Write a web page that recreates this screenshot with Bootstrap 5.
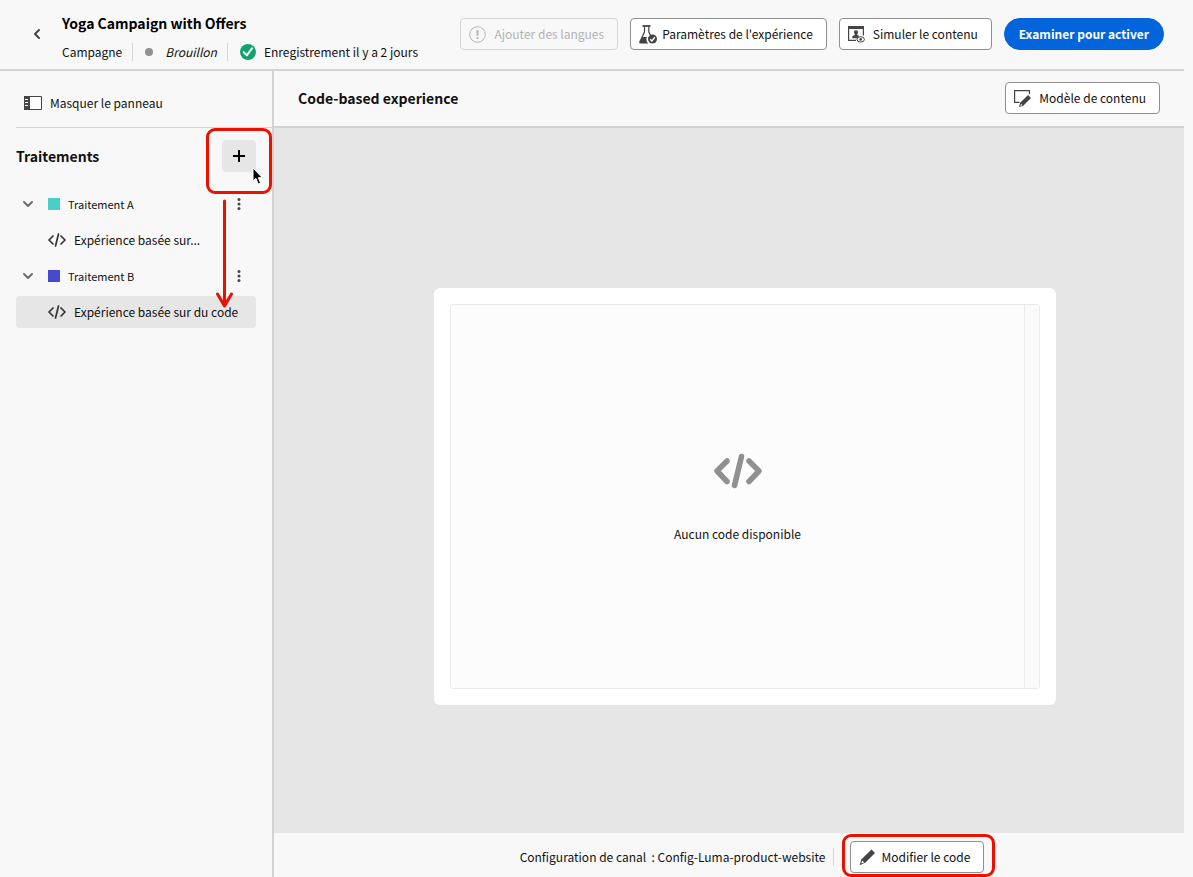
<!DOCTYPE html>
<html lang="fr">
<head>
<meta charset="utf-8">
<meta name="viewport" content="width=device-width, initial-scale=1">
<title>Yoga Campaign with Offers</title>
<link rel="stylesheet" href="https://cdn.jsdelivr.net/npm/bootstrap@5.3.0/dist/css/bootstrap.min.css">
<style>
  body { font-family: "Noto Sans CJK SC", "Noto Sans", sans-serif; font-size: 12px; line-height: 20px; color: #111; background: #f8f8f8; }
  .app { padding-right: 9px; }
  svg { display: block; flex: none; }
  .topbar { height: 71px; border-bottom: 2px solid #d3d3d3; padding: 14px 20px 0 29px; }
  .back { margin: 12px 16px 0 0; color: #444; }
  .title { font-size: 14px; line-height: 18px; font-weight: 700; color: #000; }
  .meta { margin-top: 10px; }
  .meta .rule { margin: 0 12px 0 10px; }
  .rule { width: 1px; height: 18px; background: #d8d8d8; }
  .dot { width: 8px; height: 8px; border-radius: 50%; background: #909090; margin-right: 12px; }
  .actions { gap: 12px; }
  .tool { --bs-btn-font-size: 12px; --bs-btn-line-height: 20px; --bs-btn-padding-y: 5px; --bs-btn-padding-x: 8px; --bs-btn-border-radius: 4px;
    --bs-btn-color: #111; --bs-btn-bg: #fff; --bs-btn-border-color: #909090; --bs-btn-hover-bg: #f3f3f3; --bs-btn-hover-border-color: #6e6e6e;
    --bs-btn-disabled-color: #b3b3b3; --bs-btn-disabled-bg: #f8f8f8; --bs-btn-disabled-border-color: #d5d5d5; --bs-btn-disabled-opacity: 1;
    height: 32px; padding-right: 13px; white-space: nowrap; }
  .activate { --bs-btn-font-size: 12px; --bs-btn-line-height: 18px; --bs-btn-bg: #0265dc; --bs-btn-border-color: #0265dc; --bs-btn-color: #fff;
    --bs-btn-hover-bg: #0054b6; --bs-btn-hover-color: #fff; --bs-btn-font-weight: 700; --bs-btn-padding-y: 5px; --bs-btn-padding-x: 14px; height: 32px; }
  .side { width: 274px; border-right: 2px solid #d3d3d3; padding-left: 16px; padding-right: 16px; }
  .hide-panel { height: 57px; margin-right: -16px; padding: 7px 8px 0; border-bottom: 1px solid #d5d5d5; }
  .hide-panel .btn { font-size: 12px; line-height: 20px; color: #111; }
  .side-head { height: 32px; margin: 12px 0 16px; }
  .side-head h2 { font-size: 14px; line-height: 20px; font-weight: 700; }
  .add { width: 34px; height: 32px; background: #e6e6e6; border-radius: 4px; color: #000; }
  .tree { gap: 4px; }
  .tree-row { height: 32px; padding-left: 6px; border-radius: 4px; font-size: 11px; }
  .tree-leaf { height: 32px; padding-left: 32px; border-radius: 4px; color: #111; text-decoration: none; }
  .tree-leaf.current { background: #e6e6e6; }
  .swatch { width: 12px; height: 12px; margin: 0 8px 0 14px; }
  .swatch-a { background: #4bcec8; }
  .swatch-b { background: #4549cf; }
  .more { width: 34px; height: 32px; color: #444; }
  .frame-add { position: absolute; inset: -12px -16px -22px; border: 3px solid #eb1000; border-radius: 9px; pointer-events: none; z-index: 2; }
  .frame-edit { position: absolute; inset: -7px -11px -4px -8px; border: 3px solid #eb1000; border-radius: 9px; pointer-events: none; }
  .pointer { position: absolute; left: 29px; top: 27px; z-index: 3; }
  .arrow { position: absolute; left: -7px; top: 59px; z-index: 2; pointer-events: none; }
  .section-bar { height: 57px; border-bottom: 2px solid #d3d3d3; padding: 0 24px 1px; }
  .section-bar h1 { font-size: 14px; line-height: 20px; font-weight: 700; }
  .stage { background: #e6e6e6; padding: 160px 128px 128px 160px; }
  .sheet { border-radius: 6px; padding: 16px; background: #fff; }
  .preview { background: #fcfcfc; border: 1px solid #eaeaea; border-radius: 3px; }
  .gutter { width: 15px; border-left: 1px solid #eaeaea; background: #fafafa; }
  .empty { gap: 35px; padding-top: 3px; }
  .bottom { height: 44px; padding: 4px 0 0 46px; }
</style>
</head>
<body>
<div class="app d-flex flex-column min-vh-100">
  <header class="topbar d-flex">
    <button class="back btn btn-link p-0 border-0 align-self-start" aria-label="Retour">
      <svg width="17" height="16" viewBox="0 0 17 16" fill="none" stroke="currentColor" stroke-width="2" stroke-linecap="round" stroke-linejoin="round"><path d="M10 4 6 8l4 4"/></svg>
    </button>
    <div class="text-nowrap">
      <div class="title">Yoga Campaign with Offers</div>
      <div class="meta d-flex align-items-center">
        <span>Campagne</span><span class="rule"></span>
        <span class="dot"></span><em>Brouillon</em>
        <span class="rule"></span>
        <svg class="me-2" width="16" height="16" viewBox="0 0 16 16"><circle cx="8" cy="8" r="8" fill="#12a36d"/><path d="m3.800 8.300 3 3.100 5.200-7" fill="none" stroke="#fff" stroke-width="2" stroke-linecap="round" stroke-linejoin="round"/></svg>
        <span>Enregistrement il y a 2 jours</span>
      </div>
    </div>
    <div class="actions d-flex flex-shrink-0 ms-auto pt-1">
      <button class="btn tool d-flex align-items-center gap-2" disabled>
        <svg width="17" height="17" viewBox="0 0 17 17" fill="none" stroke="currentColor"><circle cx="8.500" cy="8.500" r="7.800"/><path d="M8.500 4v5.500" stroke-width="2"/><circle cx="8.500" cy="12" r="1.100" fill="currentColor" stroke="none"/></svg>
        Ajouter des langues
      </button>
      <button class="btn tool d-flex align-items-center gap-1">
        <svg width="19" height="19" viewBox="0 0 19 19"><path d="M3.500 1h8" stroke="#444" stroke-width="1.800"/><path d="M5.500 1v6L1.300 16M9.800 1v6l1.800 3.500" fill="none" stroke="#444" stroke-width="1.200"/><path d="M3.500 12H8a5.500 5.500 0 0 0 1.200 6.400H1.500C.300 18.400-.100 17.400.5 16z" fill="#444"/><circle cx="13.500" cy="14" r="4.500" fill="#444"/><path d="m11.200 14.200 1.700 1.700 2.900-3.700" fill="none" stroke="#fff" stroke-width="1.400"/></svg>
        Paramètres de l'expérience
      </button>
      <button class="btn tool d-flex align-items-center gap-2">
        <svg width="17" height="17" viewBox="0 0 17 17"><path d="M.6 1v13.400H8M15.400 1v8.500" fill="none" stroke="#444" stroke-width="1.200"/><path d="M0 0h16v3H0zM8 4.200c1.400 0 2 .9 2 2.100 0 .9-.4 1.600-.8 2v.8l2 .7-1.700 2.400H4.300v-1.900l2.500-1.200v-.8C6.400 7.900 6 7.200 6 6.300c0-1.200.6-2.100 2-2.100z" fill="#444"/><ellipse cx="12.700" cy="13.400" rx="3.700" ry="2.700" fill="#fff" stroke="#444"/><circle cx="12.700" cy="13.400" r="1.300" fill="#444"/></svg>
        Simuler le contenu
      </button>
      <button class="btn activate rounded-pill text-nowrap">Examiner pour activer</button>
    </div>
  </header>

  <div class="d-flex flex-grow-1">
    <aside class="side flex-shrink-0">
      <div class="hide-panel d-flex align-items-center">
        <button class="btn p-0 border-0 d-flex align-items-center gap-2">
          <svg width="18" height="14" viewBox="0 0 18 14"><path d="M.5.500h17v13H.5z" fill="#fff" stroke="#444"/><path d="M0 0h6v14H0z" fill="#444"/><path d="M1 3.500h3M1 6.500h3M1 9.500h3" stroke="#fff"/></svg>
          Masquer le panneau
        </button>
      </div>
      <div class="side-head d-flex align-items-center justify-content-between">
        <h2 class="m-0">Traitements</h2>
        <div class="position-relative">
          <button class="add btn border-0 p-0 d-flex align-items-center justify-content-center" aria-label="Ajouter un traitement">
            <svg width="12" height="12" viewBox="0 0 12 12"><path d="M6 0v12M0 6h12" stroke="currentColor" stroke-width="2"/></svg>
          </button>
          <span class="frame-add"></span>
          <svg class="pointer" width="14" height="18" viewBox="0 0 14 18"><path d="M2 1v13l3-2.600L7.200 17l2.400-1L7.300 10.700h4z" fill="#000" stroke="#fff"/></svg>
          <svg class="arrow" width="20" height="110" viewBox="0 0 20 110" fill="none" stroke="#eb1000" stroke-width="3" stroke-linecap="round" stroke-linejoin="round"><path d="M9.500 2v104M2.500 95l7 12 7-12"/></svg>
        </div>
      </div>
      <nav class="tree d-flex flex-column">
        <div class="tree-row d-flex align-items-center">
          <svg width="12" height="8" viewBox="0 0 12 8" fill="none" stroke="#6e6e6e" stroke-width="2" stroke-linecap="round" stroke-linejoin="round"><path d="m2 2 4 4 4-4"/></svg>
          <span class="swatch swatch-a"></span>Traitement A
          <button class="more btn border-0 p-0 ms-auto d-flex align-items-center justify-content-center" aria-label="Actions"><svg width="4" height="12" viewBox="0 0 4 12" fill="currentColor"><circle cx="2" cy="1.500" r="1.500"/><circle cx="2" cy="6" r="1.500"/><circle cx="2" cy="10.500" r="1.500"/></svg></button>
        </div>
        <a href="#" class="tree-leaf d-flex align-items-center">
          <svg class="me-2" width="18" height="14" viewBox="0 0 18 14" fill="none" stroke="#333" stroke-width="1.700" stroke-linecap="round" stroke-linejoin="round"><path d="M5 3 1 7l4 4M13 3l4 4-4 4M10.500 1 7.500 13"/></svg>Expérience basée sur...
        </a>
        <div class="tree-row d-flex align-items-center">
          <svg width="12" height="8" viewBox="0 0 12 8" fill="none" stroke="#6e6e6e" stroke-width="2" stroke-linecap="round" stroke-linejoin="round"><path d="m2 2 4 4 4-4"/></svg>
          <span class="swatch swatch-b"></span>Traitement B
          <button class="more btn border-0 p-0 ms-auto d-flex align-items-center justify-content-center" aria-label="Actions"><svg width="4" height="12" viewBox="0 0 4 12" fill="currentColor"><circle cx="2" cy="1.500" r="1.500"/><circle cx="2" cy="6" r="1.500"/><circle cx="2" cy="10.500" r="1.500"/></svg></button>
        </div>
        <a href="#" class="tree-leaf current d-flex align-items-center">
          <svg class="me-2" width="18" height="14" viewBox="0 0 18 14" fill="none" stroke="#333" stroke-width="1.700" stroke-linecap="round" stroke-linejoin="round"><path d="M5 3 1 7l4 4M13 3l4 4-4 4M10.500 1 7.500 13"/></svg>Expérience basée sur du code
        </a>
      </nav>
    </aside>

    <main class="d-flex flex-column flex-grow-1">
      <div class="section-bar d-flex align-items-center justify-content-between">
        <h1 class="m-0">Code-based experience</h1>
        <button class="btn tool d-flex align-items-center gap-2">
          <svg width="17" height="18" viewBox="0 0 17 18"><path d="M5.500 13.400H.6V1.600h14.800V5" fill="none" stroke="#444" stroke-width="1.200"/><path d="m14 6 3 3-8 8-4 1 1.200-4.200z" fill="#444"/><path d="m7 14.800 1.400 1.400-2 .7z" fill="#fff"/></svg>
          Modèle de contenu
        </button>
      </div>
      <div class="stage d-flex flex-grow-1">
        <div class="sheet d-flex flex-grow-1">
          <div class="preview d-flex flex-grow-1">
            <div class="empty d-flex flex-column flex-grow-1 align-items-center justify-content-center">
              <svg width="50" height="36" viewBox="0 0 50 36" fill="none" stroke="#909090" stroke-width="5.500" stroke-linecap="round"><path d="M14 8 4 18l10 10.500M36 8l10 10-10 10.500M28.500 3.500 21.500 32.500" stroke-linejoin="round"/></svg>
              <div>Aucun code disponible</div>
            </div>
            <div class="gutter"></div>
          </div>
        </div>
      </div>
      <footer class="bottom d-flex align-items-center justify-content-center">
        <span class="text-nowrap">Configuration de canal &nbsp;: Config-Luma-product-website</span>
        <span class="rule ms-2 me-3"></span>
        <div class="position-relative">
          <button class="btn tool d-flex align-items-center gap-1">
            <svg width="18" height="18" viewBox="0 0 18 18"><path d="m12.500 1.500 3.500 3.500-9.500 9.500L.5 17.200l2-6z" fill="#444"/><path d="m3.200 12.600 2 1.800-3 1.200z" fill="#fff"/></svg>
            Modifier le code
          </button>
          <span class="frame-edit"></span>
        </div>
      </footer>
    </main>
  </div>
</div>
<script src="https://cdn.jsdelivr.net/npm/bootstrap@5.3.0/dist/js/bootstrap.bundle.min.js"></script>
</body>
</html>
